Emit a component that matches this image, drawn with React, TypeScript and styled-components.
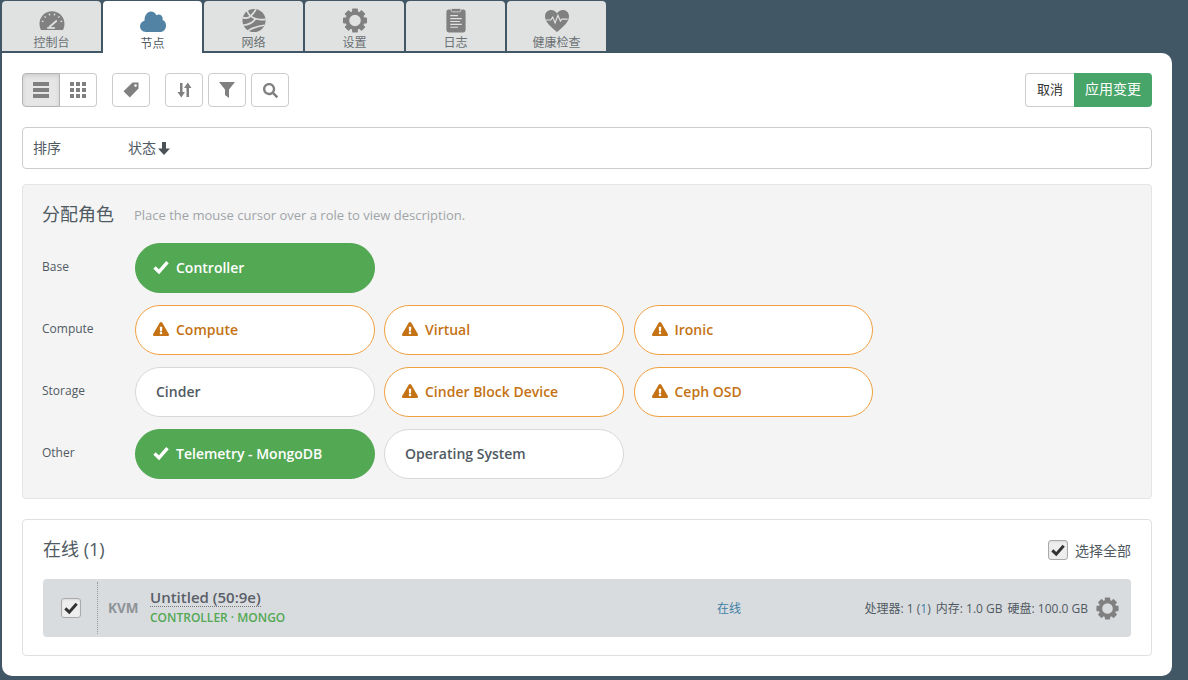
import React from 'react';
import styled, { createGlobalStyle } from 'styled-components';
import { FaExclamationTriangle, FaSearch } from 'react-icons/fa';

const GlobalStyle = createGlobalStyle`
  html, body {
    margin: 0;
    height: 100%;
    overflow: hidden;
    background: #415766;
  }
  body {
    font-family: "Open Sans", "Noto Sans CJK SC", sans-serif;
    font-size: 12px;
    color: #505a62;
  }
  * { box-sizing: border-box; }
`;

const Page = styled.div`
  width: 1188px;
  height: 680px;
  padding: 1px 16px 4px 2px;
  display: flex;
  flex-direction: column;
`;

const Tabs = styled.div`
  display: flex;
  gap: 2px;
  height: 50px;
  flex: none;
`;

const Tab = styled.div<{ $active?: boolean }>`
  width: 99px;
  height: ${(p) => (p.$active ? '52px' : '50px')};
  background: ${(p) => (p.$active ? '#fff' : '#e0e2e1')};
  color: ${(p) => (p.$active ? '#505a62' : '#6b7074')};
  border-radius: 4px 4px 0 0;
  display: flex;
  flex-direction: column;
  align-items: center;
  padding-top: 7px;
  font-size: 12px;
  line-height: 16px;
  position: relative;
  z-index: 1;
  svg {
    width: 28px;
    height: 26px;
    display: block;
    margin-bottom: 2px;
  }
`;

const Panel = styled.div`
  flex: 1;
  margin-top: 2px;
  background: #fff;
  border-radius: 0 10px 10px 10px;
  padding: 20px;
  display: flex;
  flex-direction: column;
`;

const Toolbar = styled.div`
  display: flex;
  align-items: center;
  height: 34px;
  flex: none;
`;

const ToolGroup = styled.div`
  display: flex;
  gap: 5px;
  margin-right: 15px;
`;

const Segmented = styled.div`
  display: flex;
  margin-right: 15px;
`;

const ToolButton = styled.div<{ $pressed?: boolean; $seg?: 'left' | 'right' }>`
  width: ${(p) => (p.$seg === 'right' ? '37px' : '38px')};
  height: 34px;
  border: 1px solid ${(p) => (p.$pressed ? '#b4b4b4' : '#ccc')};
  ${(p) => p.$seg === 'right' && 'border-left: none;'}
  border-radius: ${(p) =>
    p.$seg === 'left' ? '4px 0 0 4px' : p.$seg === 'right' ? '0 4px 4px 0' : '4px'};
  background: ${(p) => (p.$pressed ? '#e6e6e6' : '#fff')};
  box-shadow: ${(p) => (p.$pressed ? 'inset 0 2px 4px rgba(0,0,0,.1)' : 'none')};
  color: #808080;
  display: flex;
  align-items: center;
  justify-content: center;
  svg { display: block; }
`;

const ActionGroup = styled.div`
  margin-left: auto;
  display: flex;
`;

const CancelButton = styled.div`
  width: 49px;
  height: 34px;
  border: 1px solid #ccc;
  border-right: none;
  border-radius: 4px 0 0 4px;
  color: #333;
  font-size: 13px;
  padding-bottom: 4px;
  display: flex;
  align-items: center;
  justify-content: center;
`;

const ApplyButton = styled.div`
  width: 78px;
  height: 34px;
  background: #47a569;
  border-radius: 0 4px 4px 0;
  color: #fff;
  font-size: 14px;
  padding-bottom: 4px;
  display: flex;
  align-items: center;
  justify-content: center;
`;

const SortBar = styled.div`
  margin-top: 20px;
  height: 42px;
  flex: none;
  border: 1px solid #ccc;
  border-radius: 4px;
  display: flex;
  align-items: center;
  padding: 0 0 2px 10px;
  font-size: 14px;
`;

const SortLabel = styled.div`
  width: 95px;
`;

const SortKey = styled.div`
  display: flex;
  align-items: center;
  gap: 2px;
  color: #505a62;
  svg { margin-top: 2px; }
`;

const RolesPanel = styled.div`
  margin-top: 15px;
  height: 315px;
  flex: none;
  background: #f4f4f4;
  border: 1px solid #e5e5e5;
  border-radius: 4px;
  padding: 18px 20px 0 19px;
`;

const RolesHeader = styled.div`
  display: flex;
  align-items: center;
  height: 24px;
  margin-bottom: 16px;
`;

const Heading = styled.div`
  font-size: 18px;
  line-height: 24px;
  padding-bottom: 2px;
  color: #505a62;
`;

const Hint = styled.div`
  margin-left: 20px;
  font-size: 13px;
  color: #a0a4a8;
`;

const RoleRow = styled.div`
  display: flex;
  height: 50px;
  margin-bottom: 12px;
`;

const RowLabel = styled.div`
  width: 93px;
  flex: none;
  font-size: 12px;
  line-height: 16px;
  padding-top: 16px;
  color: #505a62;
`;

type RoleKind = 'selected' | 'warning' | 'plain';

const RoleColors: Record<RoleKind, string> = {
  selected: 'background:#53a853;border-color:#53a853;color:#fff;',
  warning: 'background:#fff;border-color:#f0a040;color:#c47214;',
  plain: 'background:#fff;border-color:#d8d8d8;color:#505a62;',
};

const Role = styled.div<{ $kind: RoleKind }>`
  width: 240px;
  height: 50px;
  margin-right: 9.5px;
  border: 1px solid;
  border-radius: 25px;
  ${(p) => RoleColors[p.$kind]}
  display: flex;
  align-items: center;
  padding: 0 0 2px ${(p) => (p.$kind === 'plain' ? '20px' : '17px')};
  font-size: 14px;
  font-weight: 600;
  &:nth-child(2) { margin-right: 9px; }
  &:nth-child(4) { width: 239.5px; }
  svg {
    flex: none;
    margin-right: 7px;
  }
`;

const NodesPanel = styled.div`
  margin-top: 20px;
  height: 137px;
  flex: none;
  border: 1px solid #e0e0e0;
  border-radius: 4px;
  padding: 0 20px;
`;

const NodesHeader = styled.div`
  height: 59px;
  display: flex;
  align-items: center;
  justify-content: space-between;
`;

const SelectAll = styled.div`
  display: flex;
  align-items: center;
  gap: 7px;
  font-size: 14px;
`;

const Checkbox = styled.div`
  width: 20px;
  height: 20px;
  background: #eee;
  border: 1px solid #aaa;
  border-radius: 3px;
  box-shadow: inset 0 1px 2px rgba(0, 0, 0, 0.08);
  color: #333;
  display: flex;
  align-items: center;
  justify-content: center;
`;

const NodeRow = styled.div`
  height: 58px;
  background: #d9dcdf;
  border-radius: 4px;
  display: flex;
  align-items: center;
`;

const NodeSelect = styled.div`
  width: 55px;
  height: 52px;
  flex: none;
  border-right: 1px dotted #999;
  display: flex;
  align-items: center;
  padding-left: 18px;
`;

const Manufacturer = styled.div`
  width: 42px;
  margin-left: 10px;
  flex: none;
  font-size: 13.500px;
  font-weight: 700;
  color: #8f9397;
`;

const NodeName = styled.div`
  width: 567px;
  flex: none;
  padding-bottom: 2px;
`;

const NameText = styled.span`
  font-size: 15px;
  line-height: 17px;
  font-weight: 600;
  color: #5a6068;
  border-bottom: 1px dotted #777;
  display: inline-block;
  margin-bottom: 2px;
`;

const NodeRoles = styled.div`
  font-size: 12px;
  line-height: 17px;
  font-weight: 600;
  color: #53a853;
`;

const NodeStatus = styled.div`
  width: 100px;
  flex: none;
  font-size: 12px;
  color: #3f7fa6;
`;

const NodeInfo = styled.div`
  flex: 1;
  display: flex;
  align-items: center;
  justify-content: flex-end;
  font-size: 12px;
  white-space: nowrap;
  color: #505a62;
  padding-right: 12px;
  span + span { margin-left: 5px; }
  svg { margin-left: 8px; }
`;

const Link = styled.b`
  font-weight: 400;
  color: #3f7fa6;
`;

const GAUGE_TICKS = [-75, -45, -15, 15, 45, 75];

const DashboardIcon = () => (
  <svg viewBox="0 0 28 26">
    <path
      fill="#808080"
      d="M14 3.500C7 3.500 1 9 1 16.500c0 2.200.5 4.200 1.400 6 .2.400.6.500 1 .5h21.200c.4 0 .8-.1 1-.5.900-1.800 1.400-3.800 1.400-6C27 9 21 3.500 14 3.500z"
    />
    {GAUGE_TICKS.map((a) => (
      <rect key={a} x="13.300" y="5.500" width="1.400" height="1.800" fill="#e0e2e1" transform={`rotate(${a} 14 16.500)`} />
    ))}
    <path stroke="#e0e2e1" strokeWidth="1.800" strokeLinecap="round" d="M11.500 19.500l7-6" />
    <path stroke="#e0e2e1" strokeWidth="1.800" d="M9 20.800h8" />
  </svg>
);

const NetworkIcon = () => (
  <svg viewBox="0 0 28 26">
    <circle cx="14" cy="13" r="12" fill="#808080" />
    <g fill="none" stroke="#e0e2e1" strokeWidth="1.700">
      <path d="M7 3c1 4 4 7 10 8.500 3 .7 6 .8 9 .3" />
      <path d="M2.500 10c3 1 6 .5 8-1.500 2-2 4-4 5.500-7" />
      <path d="M2.500 18c5-.5 10-2.500 13-6.500" />
      <path d="M8 23.500c4-2.500 10-4.500 17-5.500" />
    </g>
  </svg>
);

const GEAR_TEETH = [0, 45, 90, 135, 180, 225, 270, 315];

// eight square teeth around a thick ring, the middle stays see-through
const GearIcon: React.FC<{ size?: number }> = ({ size = 26 }) => (
  <svg width={size} height={size} viewBox="0 0 26 26" fill="#808080">
    {GEAR_TEETH.map((a) => (
      <rect key={a} x="10" y="0.500" width="6" height="6" rx="0.800" transform={`rotate(${a} 13 13)`} />
    ))}
    <circle cx="13" cy="13" r="8" fill="none" stroke="#808080" strokeWidth="4" />
  </svg>
);

const LogsIcon = () => (
  <svg viewBox="0 0 28 26">
    <rect x="4" y="1.500" width="20" height="24" rx="2.500" fill="#808080" />
    <rect x="9" y="0.500" width="10" height="3.500" rx="1.500" fill="#808080" stroke="#e0e2e1" strokeWidth="0.800" />
    <path stroke="#e0e2e1" strokeWidth="1.200" d="M8 8h8M8 11h12M8 14h10M8 17h12M8 20h8" />
  </svg>
);

const HealthIcon = () => (
  <svg viewBox="0 0 28 26">
    <path
      fill="#808080"
      d="M14 25C7 19 1.500 14.500 1.500 8.500 1.500 4.500 4.500 2 8 2c2.500 0 4.700 1.300 6 3.500C15.300 3.300 17.500 2 20 2c3.500 0 6.500 2.500 6.500 6.500C26.500 14.500 21 19 14 25z"
    />
    <path fill="none" stroke="#e0e2e1" strokeWidth="1.200" d="M2.500 12.500h5l2-3 2.500 6 3-8 2.500 6 1.500-2h6" />
  </svg>
);

const CloudIcon = () => (
  <svg viewBox="0 0 28 26">
    <path
      fill="#5283a4"
      d="M7 24C3.500 24 1 21.500 1 18.300c0-2.800 1.900-5 4.500-5.600C5.400 7.500 8.300 3.500 12 3.500c2.500 0 4.500 1.500 5.300 3.800 .7-.5 1.500-.8 2.400-.8 2.300 0 4 1.800 4 4.200 0 .5 0 .9-.2 1.300 2.300.7 3.500 3 3.500 5.700 0 3.500-2.500 6.300-6 6.300z"
    />
  </svg>
);

const ListIcon = () => (
  <svg width="16" height="16" viewBox="0 0 16 16" fill="#808080">
    <rect y="0" width="16" height="4" />
    <rect y="6" width="16" height="4" />
    <rect y="12" width="16" height="4" />
  </svg>
);

const GridIcon = () => (
  <svg width="16" height="16" viewBox="0 0 16 16" fill="#808080">
    {[0, 6, 12].map((y) =>
      [0, 6, 12].map((x) => <rect key={`${x}-${y}`} x={x} y={y} width="4" height="4" />),
    )}
  </svg>
);

const TagIcon = () => (
  <svg width="18" height="18" viewBox="0 0 18 18">
    <path
      fill="#808080"
      fillRule="evenodd"
      d="M10.500 1.500H16.500V7.500L7.800 16.500 1.500 10.200zM13.500 3.300a1.300 1.300 0 1 0 0 2.600 1.300 1.300 0 0 0 0-2.600z"
    />
  </svg>
);

const SortIcon = () => (
  <svg width="15" height="16" viewBox="0 0 15 16" fill="#808080">
    <path d="M3 1h2.500v9H8l-3.700 5.500L.5 10H3z" />
    <path d="M9.500 15h2.500V6h2.500L10.800.5 7 6h2.500z" />
  </svg>
);

const FilterIcon = () => (
  <svg width="16" height="16" viewBox="0 0 16 16" fill="#808080">
    <path d="M0 0h16L10 7.500V16L6 13V7.500z" />
  </svg>
);

const CheckIcon: React.FC<{ size?: number }> = ({ size = 16 }) => (
  <svg width={size} height={size} viewBox="0 0 16 16">
    <path fill="none" stroke="currentColor" strokeWidth="3.400" d="M1.500 8.500L6 12.800 14.500 3.200" />
  </svg>
);

const DownArrow = () => (
  <svg width="12" height="13" viewBox="0 0 12 13" fill="#4a5258">
    <path d="M4 0h4v6.500h4L6 13 0 6.500h4z" />
  </svg>
);

const roleRows: { label: string; roles: { name: string; kind: RoleKind }[] }[] = [
  { label: 'Base', roles: [{ name: 'Controller', kind: 'selected' }] },
  {
    label: 'Compute',
    roles: [
      { name: 'Compute', kind: 'warning' },
      { name: 'Virtual', kind: 'warning' },
      { name: 'Ironic', kind: 'warning' },
    ],
  },
  {
    label: 'Storage',
    roles: [
      { name: 'Cinder', kind: 'plain' },
      { name: 'Cinder Block Device', kind: 'warning' },
      { name: 'Ceph OSD', kind: 'warning' },
    ],
  },
  {
    label: 'Other',
    roles: [
      { name: 'Telemetry - MongoDB', kind: 'selected' },
      { name: 'Operating System', kind: 'plain' },
    ],
  },
];

const App: React.FC = () => {
  return (
    <Page>
      <GlobalStyle />
      <Tabs>
        <Tab><DashboardIcon />控制台</Tab>
        <Tab $active><CloudIcon />节点</Tab>
        <Tab><NetworkIcon />网络</Tab>
        <Tab><GearIcon />设置</Tab>
        <Tab><LogsIcon />日志</Tab>
        <Tab><HealthIcon />健康检查</Tab>
      </Tabs>
      <Panel>
        <Toolbar>
          <Segmented>
            <ToolButton $pressed $seg="left"><ListIcon /></ToolButton>
            <ToolButton $seg="right"><GridIcon /></ToolButton>
          </Segmented>
          <ToolGroup>
            <ToolButton><TagIcon /></ToolButton>
          </ToolGroup>
          <ToolGroup>
            <ToolButton><SortIcon /></ToolButton>
            <ToolButton><FilterIcon /></ToolButton>
            <ToolButton><FaSearch size={15} /></ToolButton>
          </ToolGroup>
          <ActionGroup>
            <CancelButton>取消</CancelButton>
            <ApplyButton>应用变更</ApplyButton>
          </ActionGroup>
        </Toolbar>
        <SortBar>
          <SortLabel>排序</SortLabel>
          <SortKey>状态<DownArrow /></SortKey>
        </SortBar>
        <RolesPanel>
          <RolesHeader>
            <Heading>分配角色</Heading>
            <Hint>Place the mouse cursor over a role to view description.</Hint>
          </RolesHeader>
          {roleRows.map((row) => (
            <RoleRow key={row.label}>
              <RowLabel>{row.label}</RowLabel>
              {row.roles.map((role) => (
                <Role key={role.name} $kind={role.kind}>
                  {role.kind === 'selected' && <CheckIcon />}
                  {role.kind === 'warning' && <FaExclamationTriangle size={16} />}
                  {role.name}
                </Role>
              ))}
            </RoleRow>
          ))}
        </RolesPanel>
        <NodesPanel>
          <NodesHeader>
            <Heading>在线 (1)</Heading>
            <SelectAll>
              <Checkbox><CheckIcon size={14} /></Checkbox>
              选择全部
            </SelectAll>
          </NodesHeader>
          <NodeRow>
            <NodeSelect>
              <Checkbox><CheckIcon size={14} /></Checkbox>
            </NodeSelect>
            <Manufacturer>KVM</Manufacturer>
            <NodeName>
              <NameText>Untitled (50:9e)</NameText>
              <NodeRoles>CONTROLLER · MONGO</NodeRoles>
            </NodeName>
            <NodeStatus>在线</NodeStatus>
            <NodeInfo>
              <span>处理器: 1 (<Link>1</Link>)</span>
              <span>内存: 1.0 GB</span>
              <span>硬盘: 100.0 GB</span>
              <GearIcon size={23} />
            </NodeInfo>
          </NodeRow>
        </NodesPanel>
      </Panel>
    </Page>
  );
};

export default App;
